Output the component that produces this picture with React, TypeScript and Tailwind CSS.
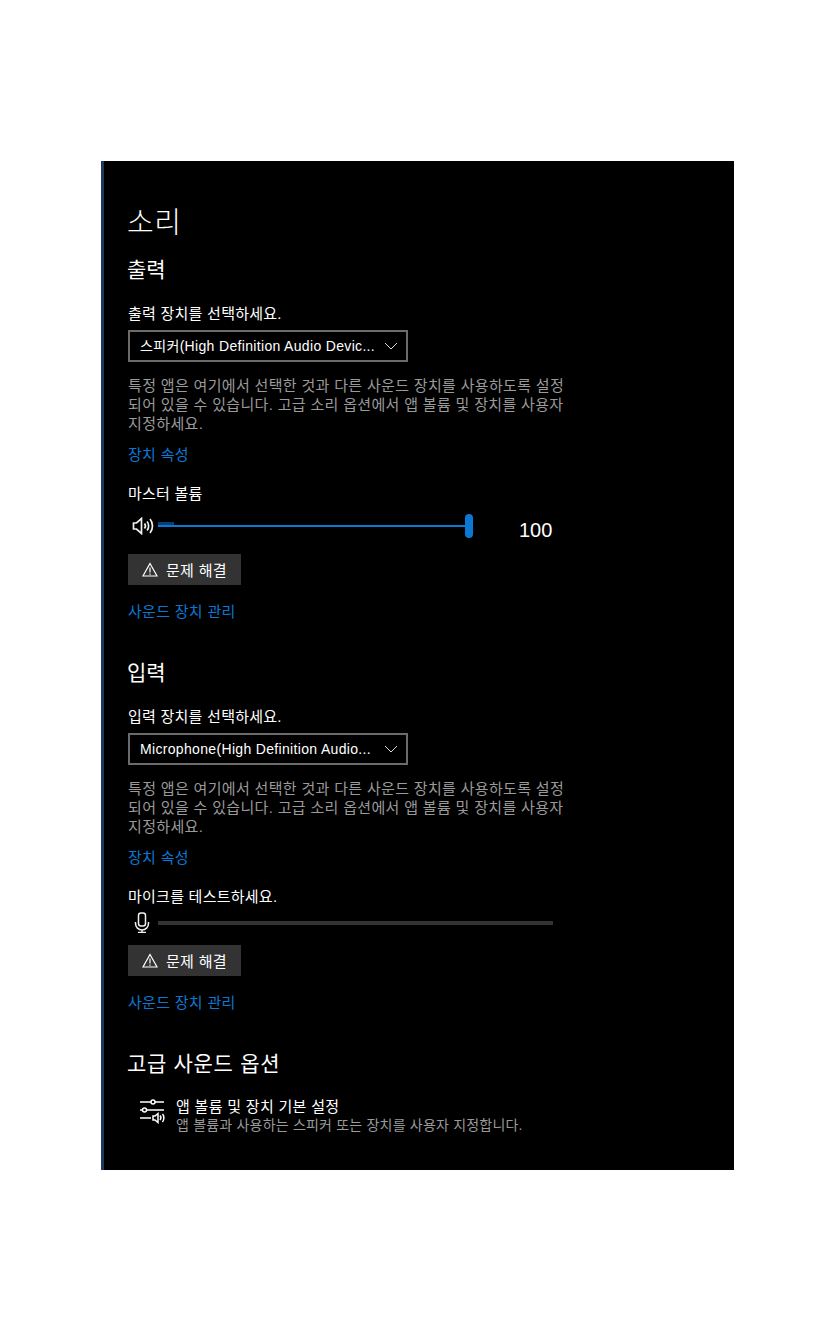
const FONT = "font-['Liberation_Sans','Noto_Sans_CJK_KR',sans-serif]";

function Chevron() {
  return (
    <svg width="14" height="8" viewBox="0 0 14 8" fill="none" stroke="#d8d8d8" strokeWidth="1">
      <path d="M1 1l6 6 6-6" />
    </svg>
  );
}

function Warn() {
  return (
    <svg width="16" height="15" viewBox="0 0 16 15" fill="none" stroke="#fff" strokeWidth="1.2">
      <path d="M8 1.500L15 14H1z" />
      <path d="M8 5.500v5M8 11.500v1.200" />
    </svg>
  );
}

function Speaker() {
  return (
    <svg width="22" height="18" viewBox="0 0 22 18" fill="none" stroke="#f0f0f0" strokeWidth="1.7">
      <path d="M1.500 6h3L9.500 1.500v15L4.500 12h-3z" />
      <path d="M12.500 6.500c1.200 1.500 1.200 3.500 0 5M15 4.500c2.200 2.500 2.200 6.500 0 9M18 2c3.300 4 3.300 10 0 14" />
    </svg>
  );
}

function Mic() {
  return (
    <svg width="16" height="21" viewBox="0 0 16 21" fill="none" stroke="#f0f0f0" strokeWidth="1.5">
      <rect x="4.500" y="1" width="7" height="13" rx="2.500" />
      <path d="M1.500 10v1.500a6.500 6.500 0 0 0 13 0V10M8 18v2.500M4 20.500h8" />
    </svg>
  );
}

function Sliders() {
  return (
    <svg width="26" height="26" viewBox="0 0 26 26" fill="none" stroke="#fff" strokeWidth="1.5">
      <path d="M0 4h11M15 4h9M0 12h2.500M6.500 12h17.500M0 20h11" />
      <circle cx="13" cy="4" r="2" />
      <circle cx="4.500" cy="12" r="2" />
      <path d="M13 18h2l3-2.500v9L15 22h-2z" />
      <path d="M20 17.500c1 1.200 1 3.300 0 4.500M22.500 16c1.800 2.200 1.800 5.800 0 8" />
    </svg>
  );
}

function Select({ label }: { label: string }) {
  return (
    <div className="mt-[7px] flex h-[32px] w-[280px] items-center justify-between border-2 border-[#6b6b6b] pl-[10px] pr-[8px]">
      <span className="pt-[1px] text-[14px] tracking-[0.33px] text-white">{label}</span>
      <Chevron />
    </div>
  );
}

function Description() {
  return (
    <p className="mt-[14px] w-[445px] text-[15px] leading-[19px] tracking-[0.33px] text-[#9a9a9a]">
      특정 앱은 여기에서 선택한 것과 다른 사운드 장치를 사용하도록 설정
      <br />
      되어 있을 수 있습니다. 고급 소리 옵션에서 앱 볼륨 및 장치를 사용자
      <br />
      지정하세요.
    </p>
  );
}

function Trouble() {
  return (
    <div className="flex h-[31px] w-[113px] items-center gap-[8px] bg-[#333333] pl-[14px]">
      <Warn />
      <span className="pt-[3px] text-[15px] tracking-[0.3px] text-white">문제 해결</span>
    </div>
  );
}

function Link({ children }: { children: string }) {
  return <div className="text-[15px] leading-[20px] tracking-[0.3px] text-[#0a78d4]">{children}</div>;
}

export default function App() {
  return (
    <div className={`${FONT} min-h-[1331px] bg-white pt-[161px]`}>
      <div className="ml-[101px] h-[1009px] w-[633px] border-l-[3px] border-[#1d3a5c] bg-black pl-[24px] text-white">
        <h1 className="-ml-px pt-[43px] text-[29px] font-light leading-[38px] tracking-[0.5px]">소리</h1>

        <h2 className="-ml-px mt-[14px] text-[21px] font-normal leading-[28px]">출력</h2>
        <div className="mt-[20px] text-[15px] leading-[20px] tracking-[0.25px]">출력 장치를 선택하세요.</div>
        <div className="-mt-px"><Select label="스피커(High Definition Audio Devic..." /></div>
        <Description />
        <div className="mt-[12px]"><Link>장치 속성</Link></div>

        <div className="mt-[19px] text-[15px] leading-[20px] tracking-[0.25px]">마스터 볼륨</div>
        <div className="mt-[7px] flex h-[30px] items-start">
          <div className="ml-[4px] mt-[6px] w-[26px]"><Speaker /></div>
          <div className="relative mt-[9px] h-[12px] w-[315px]">
            <div className="absolute left-0 top-[2px] h-[3px] w-[16px] bg-[#063f70]" />
            <div className="absolute left-0 top-[5px] h-[2px] w-[311px] bg-[#0a78d4]" />
            <div className="absolute left-[307px] top-[-6px] h-[24px] w-[8px] rounded-full bg-[#0a78d4]" />
          </div>
          <div className="ml-[46px] mt-[7px] text-[20px] leading-[24px]">100</div>
        </div>
        <div className="mt-[13px]"><Trouble /></div>
        <div className="mt-[17px]"><Link>사운드 장치 관리</Link></div>

        <h2 className="-ml-px mt-[37px] text-[21px] font-normal leading-[28px]">입력</h2>
        <div className="mt-[20px] text-[15px] leading-[20px] tracking-[0.25px]">입력 장치를 선택하세요.</div>
        <div className="-mt-px"><Select label="Microphone(High Definition Audio..." /></div>
        <Description />
        <div className="mt-[12px]"><Link>장치 속성</Link></div>

        <div className="mt-[19px] text-[15px] leading-[20px] tracking-[0.25px]">마이크를 테스트하세요.</div>
        <div className="mt-[4px] flex h-[24px] items-start">
          <div className="ml-[6px] mt-[1px] w-[24px]"><Mic /></div>
          <div className="mt-[10px] h-[4px] w-[395px] bg-[#333333]" />
        </div>
        <div className="mt-[10px]"><Trouble /></div>
        <div className="mt-[17px]"><Link>사운드 장치 관리</Link></div>

        <h2 className="-ml-px mt-[37px] text-[21px] font-normal leading-[28px] tracking-[0.7px]">고급 사운드 옵션</h2>
        <div className="mt-[20px] flex items-start">
          <div className="ml-[12px] mt-[0px] w-[36px]"><Sliders /></div>
          <div>
            <div className="text-[15px] leading-[18px] tracking-[0.3px]">앱 볼륨 및 장치 기본 설정</div>
            <div className="text-[14px] leading-[18px] tracking-[0.2px] text-[#9a9a9a]">앱 볼륨과 사용하는 스피커 또는 장치를 사용자 지정합니다.</div>
          </div>
        </div>
      </div>
    </div>
  );
}
